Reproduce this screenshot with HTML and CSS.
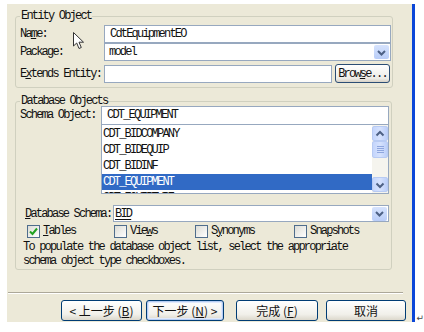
FILE: index.html
```html
<!DOCTYPE html>
<html lang="en">
<head>
    <meta charset="UTF-8">
    <title>Entity Object</title>
    <link rel="stylesheet" href="styles.css">
</head>
<body>
    <div class="dialog">
        <fieldset class="group entity">
            <legend>Entity Object</legend>
            <div class="row">
                <label class="lbl">Na<u>m</u>e:</label>
                <div class="field">CdtEquipmentEO</div>
            </div>
            <div class="row">
                <label class="lbl">Package:</label>
                <div class="field combo">
                    <span class="combo-text">model</span>
                    <span class="drop-btn">
                        <svg width="15" height="15" viewBox="0 0 15 15"><path d="M4 6 L7.5 9.5 L11 6" fill="none" stroke="#4d6185" stroke-width="2"/></svg>
                    </span>
                </div>
            </div>
            <div class="row extends">
                <label class="lbl">E<u>x</u>tends Entity:</label>
                <div class="field"></div>
                <button class="browse">Brow<u>s</u>e...</button>
            </div>
        </fieldset>

        <fieldset class="group database">
            <legend>Database Objects</legend>
            <div class="schema-row">
                <label class="lbl schema-lbl">Schema Object:</label>
                <div class="schema-col">
                    <div class="field tall">CDT_EQUIPMENT</div>
                    <div class="list">
                        <div class="items">
                            <div class="item">CDT_BIDCOMPANY</div>
                            <div class="item">CDT_BIDEQUIP</div>
                            <div class="item">CDT_BIDINF</div>
                            <div class="item selected">CDT_EQUIPMENT</div>
                            <div class="item peek">CDT_EQUIPTYPE</div>
                        </div>
                        <div class="scrollbar">
                            <span class="sb-btn">
                                <svg width="14" height="14" viewBox="0 0 14 14"><path d="M3.5 8.5 L7 5 L10.5 8.5" fill="none" stroke="#4d6185" stroke-width="2"/></svg>
                            </span>
                            <span class="sb-thumb"><i></i><i></i><i></i><i></i></span>
                            <span class="sb-track"></span>
                            <span class="sb-btn">
                                <svg width="14" height="14" viewBox="0 0 14 14"><path d="M3.5 5.5 L7 9 L10.5 5.5" fill="none" stroke="#4d6185" stroke-width="2"/></svg>
                            </span>
                        </div>
                    </div>
                </div>
            </div>
            <div class="row db-schema">
                <label class="lbl ds-lbl"><u>D</u>atabase Schema:</label>
                <div class="field combo short">
                    <span class="combo-text bid">BID</span>
                    <span class="drop-btn">
                        <svg width="15" height="15" viewBox="0 0 15 15"><path d="M4 6 L7.5 9.5 L11 6" fill="none" stroke="#4d6185" stroke-width="2"/></svg>
                    </span>
                </div>
            </div>
            <div class="checks">
                <span class="check c1">
                    <span class="box">
                        <svg width="11" height="11" viewBox="0 0 11 11"><path d="M2 5.5 L4.5 8 L9 2.5" fill="none" stroke="#21a121" stroke-width="2"/></svg>
                    </span><u>T</u>ables
                </span>
                <span class="check c2"><span class="box"></span>Vie<u>w</u>s</span>
                <span class="check c3"><span class="box"></span>S<u>y</u>nonyms</span>
                <span class="check"><span class="box"></span>Sna<u>p</u>shots</span>
            </div>
            <p class="hint">To populate the database object list, select the appropriate<br>schema object type checkboxes.</p>
        </fieldset>

        <div class="separator"></div>

        <div class="buttons">
            <button class="btn b-back">&lt; 上一步 (<u>B</u>)</button>
            <button class="btn b-next default">下一步 (<u>N</u>) &gt;</button>
            <button class="btn b-finish">完成 (<u>F</u>)</button>
            <button class="btn b-cancel">取消</button>
        </div>
    </div>
    <span class="return-mark">↵</span>

    <!-- mouse pointer over the form -->
    <svg class="pointer" width="13" height="18" viewBox="0 0 13 18">
        <path d="M0.5 0.5 L0.5 14 L3.7 11 L6 16.5 L8.3 15.5 L6 10.2 L10.5 10.2 Z" fill="#fff" stroke="#333" stroke-width="1"/>
    </svg>
</body>
</html>
```

FILE: styles.css
```css
/* XP style wizard page */
body {
    margin: 0;
    width: 424px;
    height: 332px;
    background-color: #fff;
    display: flex;
    position: relative;
    overflow: hidden;
    font-family: "Liberation Mono", monospace;
    font-size: 12px;
    letter-spacing: -1.8px;
    color: #111;
}

.dialog {
    margin: 4px 0 0 7px;
    width: 406px;
    height: 311px;
    padding-top: 7px;
    box-sizing: content-box;
    background-color: #ece9d8;
    border-right: 3px solid #0b46d8;
    display: flex;
    flex-direction: column;
}

u {
    text-decoration-thickness: 1px;
    text-underline-offset: 1px;
}

.group {
    margin: 0 0 0 8px;
    border: 1px solid #d0d0bf;
    border-radius: 3px;
    padding: 4px 1px 4px 4px;
    min-width: 0;
}

.group legend {
    padding: 0 1px;
    line-height: 10px;
}

.entity {
    width: 378px;
    box-sizing: border-box;
}

.database {
    width: 377px;
    box-sizing: border-box;
    margin-top: 8px;
    padding: 0 2px 1px 4px;
}

.row {
    display: flex;
    align-items: center;
    height: 18px;
}

.extends {
    margin-top: 3px;
    height: 19px;
}

.lbl {
    width: 84px;
    flex-shrink: 0;
    white-space: nowrap;
}

.field {
    flex: 1;
    height: 18px;
    box-sizing: border-box;
    background-color: #fff;
    border: 1px solid #97a8bf;
    padding-left: 5px;
    line-height: 16px;
    white-space: nowrap;
}

.combo {
    display: flex;
    align-items: center;
    padding-left: 4px;
}

.combo-text {
    flex: 1;
}

.drop-btn {
    width: 15px;
    height: 14px;
    margin-right: 1px;
    background: linear-gradient(#d6e3fd, #b9cdf8);
    border-radius: 2px;
    display: flex;
    align-items: center;
    justify-content: center;
}

.browse {
    width: 55px;
    height: 19px;
    margin: 0 1px 0 3px;
    padding: 0;
    font: inherit;
    letter-spacing: -1.8px;
    color: #111;
    background: linear-gradient(#fff, #ecebe6 80%, #d6d0c5);
    border: 1px solid #2b4d74;
    border-radius: 3px;
    text-align: center;
}

.schema-row {
    display: flex;
}

.schema-lbl {
    width: 81px;
    line-height: 19px;
}

.schema-col {
    flex: 1;
}

.field.tall {
    height: 19px;
    line-height: 17px;
}

.list {
    height: 69px;
    box-sizing: border-box;
    border: 1px solid #97a8bf;
    border-top: none;
    background-color: #fff;
    display: flex;
    overflow: hidden;
}

.items {
    flex: 1;
    padding-top: 1px;
    overflow: hidden;
}

.item {
    height: 16px;
    line-height: 16px;
    padding-left: 1px;
    white-space: nowrap;
}

.item.selected {
    background-color: #316ac5;
    color: #fff;
}

.item.peek {
    height: 3px;
    overflow: hidden;
}

.scrollbar {
    width: 16px;
    display: flex;
    flex-direction: column;
    padding: 1px 0;
    box-sizing: border-box;
    background-color: #f5f4ee;
}

.sb-btn,
.sb-thumb {
    height: 15px;
    box-sizing: border-box;
    background: linear-gradient(90deg, #c4d5fc, #d6e2fd 50%, #bccff9);
    border: 1px solid #b8cbf3;
    border-radius: 2px;
    display: flex;
    align-items: center;
    justify-content: center;
}

.sb-thumb {
    height: 17px;
    flex-direction: column;
    gap: 1px;
}

.sb-thumb i {
    display: block;
    width: 7px;
    height: 1px;
    background-color: #8ea6de;
}

.sb-track {
    flex: 1;
}

.db-schema {
    margin-top: 11px;
    height: 17px;
    padding-left: 5px;
}

.ds-lbl {
    width: 88px;
}

.field.short {
    height: 17px;
    padding-left: 1px;
}

.bid {
    text-decoration: underline;
    text-underline-offset: 2px;
}

.checks {
    display: flex;
    align-items: center;
    height: 14px;
    margin-top: 2px;
    padding-left: 7px;
}

.check {
    display: flex;
    align-items: center;
    white-space: nowrap;
}

.c1 { width: 87px; }
.c2 { width: 81px; }
.c3 { width: 99px; }

.box {
    width: 13px;
    height: 13px;
    box-sizing: border-box;
    margin-right: 3px;
    border: 1px solid #4f6d8c;
    background: linear-gradient(135deg, #dcdcd5, #fff);
    display: flex;
    align-items: center;
    justify-content: center;
}

.hint {
    margin: 2px 0 0 0;
    padding-left: 3px;
    line-height: 14px;
    white-space: nowrap;
}

.separator {
    margin: 22px 0 0 1px;
    width: 395px;
    border-top: 1px solid #aca899;
    border-bottom: 1px solid #fff;
}

.buttons {
    display: flex;
    margin-top: 6px;
    padding-left: 54px;
}

.btn {
    height: 21px;
    padding: 0;
    font-family: "Noto Sans CJK SC", sans-serif;
    font-size: 12px;
    letter-spacing: 0;
    color: #111;
    background: linear-gradient(#fff, #f1f0ea 70%, #dcd8cc);
    border: 1px solid #003c74;
    border-radius: 3px;
    text-align: center;
    line-height: 17px;
    white-space: nowrap;
}

.b-back { width: 81px; }
.b-next { width: 78px; margin-left: 4px; }
.b-finish { width: 82px; margin-left: 12px; }
.b-cancel { width: 80px; margin-left: 8px; }

.btn.default {
    box-shadow: inset 0 0 0 1px #b6cdf3, inset 0 0 0 2px #e0e9fb;
}

.return-mark {
    align-self: flex-end;
    margin: 0 0 9px 1px;
    font-family: "DejaVu Sans", sans-serif;
    font-size: 9px;
    letter-spacing: 0;
    color: #444;
}

.pointer {
    position: absolute;
    left: 73px;
    top: 32px;
}
```
